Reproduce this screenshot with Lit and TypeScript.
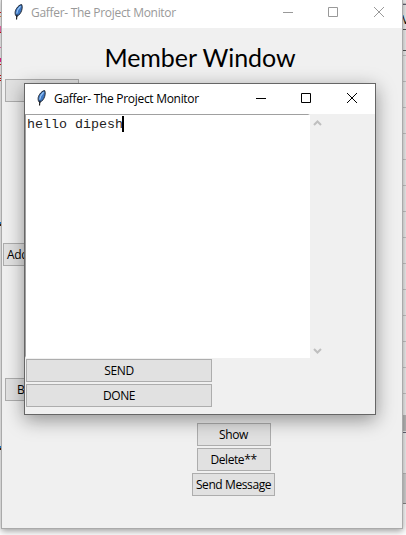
import { LitElement, html, css, svg } from "lit";
import { customElement, property } from "lit/decorators.js";

@customElement("title-bar")
class TitleBar extends LitElement {
  static styles = css`
    :host { display: flex; align-items: center; background: #fff; color: #000; height: 30px;
      font: 12px/16px "Open Sans", "Noto Sans", sans-serif; box-sizing: border-box; }
    .feather { margin: 0 0 2px 11px; width: 12px; height: 16px; flex: none; }
    .name { margin-left: 6px; letter-spacing: -0.3px; white-space: nowrap; flex: 1; }
    .controls { display: flex; flex: none; margin-bottom: 2px; }
    .controls svg { width: 46px; height: 12px; display: block; }
  `;
  @property() name = "";
  render() {
    return html`
      <svg class="feather" viewBox="0 0 12 16">
        <path d="M3.500 12.500C1.500 10.500 1.800 7 3.500 4.500C5 2.200 7 .6 8.700 .6C9.700 2.500 9.200 6 7.800 8.500C6.600 10.600 5 12 3.500 12.500Z" fill="#3f78c4" stroke="#14181f" stroke-width=".9"/>
        <path d="M7.600 2.200C5.400 4 4.200 6.500 3.700 9.500" fill="none" stroke="#9cc8f5" stroke-width="1.200"/>
        <path d="M4 10.500L3.500 15.500" stroke="#111" stroke-width="1.100"/>
      </svg>
      <span class="name">${this.name}</span>
      <div class="controls">
        ${[svg`<path d="M19 6.500H29"/>`, svg`<path d="M18.500 1.500H27.500V10.500H18.500Z"/>`, svg`<path d="M18 1L28 11M28 1L18 11"/>`].map(
          (p) => html`<svg viewBox="0 0 46 12" fill="none" stroke="currentColor" stroke-width="1">${p}</svg>`
        )}
      </div>`;
  }
}

@customElement("push-button")
class PushButton extends LitElement {
  static styles = css`
    :host { display: flex; align-items: center; justify-content: center; box-sizing: border-box;
      height: 23px; width: 74px; border: 1px solid #adadad; background: #e1e1e1; color: #000;
      font: 12px/16px "Open Sans", "Noto Sans", sans-serif; letter-spacing: -0.4px; white-space: nowrap; }
  `;
  render() { return html`<slot></slot>`; }
}

@customElement("app-root")
class AppRoot extends LitElement {
  static styles = css`
    :host { display: flex; justify-content: space-between; position: relative; width: 406px; height: 535px; overflow: hidden; background: #fff; }
    .code { width: 2px; height: 535px; background: linear-gradient(#fff 12px, #d22 12px 13px, #fff 13px 16px, #e84 16px 17px, #fff 17px 26px,
      #f7b 26px 32px, #d11 32px 33px, #fff 33px 47px, #f7b 47px 48px, #fff 48px 58px, #f29 58px 62px, #fff 62px 64px, #d11 64px 65px, #fff 65px 75px,
      #d11 75px 76px, #fff 76px 78px, #d11 78px 79px, #fff 79px 80px, #d11 80px 81px, #fff 81px 222px, #28d 222px 224px, #421 224px 226px,
      #fff 226px 446px, #28d 446px 448px, #421 448px 450px, #fff 450px); }
    .list { width: 4px; height: 504px; border-bottom: 1px solid #888; overflow: hidden; font: 12px/18px "Open Sans", sans-serif; padding-top: 11px; box-sizing: border-box;
      background: linear-gradient(#fff0 4px, #667 4px 5px, #fff0 5px 29px, #555 29px 30px, #fff0 30px 50px, #555 50px 51px, #fff0 51px 415px,
        #bbb 415px 431px, #eee 431px 432px, #667 432px 433px, #f2f2f2 433px 473px, #bbb 473px 474px, #d4d4d4 474px),
        repeating-linear-gradient(#f2f2f2 0 3px, #c8c8c8 3px 4px, #f2f2f2 4px 26px); }
    .window { position: absolute; box-sizing: border-box; display: flex; flex-direction: column; background: #f0f0f0; }
    .main { left: 1px; top: -3px; width: 402px; height: 532px; border: 1px solid #aaa; box-shadow: 0 2px 7px #0006; }
    .main title-bar { color: #999; }
    .dialog { left: 24px; top: 83px; width: 352px; height: 332px; border: 1px solid #666; box-shadow: 0 5px 18px #0006; }
    h1 { margin: 12px 0 0; padding-right: 4px; text-align: center; font: 400 25px/34px Lato, sans-serif; letter-spacing: -0.05px; color: #000; }
    .left { display: flex; flex-direction: column; align-items: flex-start; margin: 5px 0 0 3px; }
    .add { margin: 141px 0 0 -2px; justify-content: flex-start; padding-left: 3px; }
    .back { margin-top: 112px; justify-content: flex-start; padding-left: 11px; }
    .actions { display: flex; flex-direction: column; align-items: center; gap: 2px; margin-top: 22px; width: 463px; }
    .wide { width: 83px; }
    .editor { display: flex; width: 300px; height: 244px; }
    .text { box-sizing: border-box; width: 285px; height: 244px; background: #fff; border: solid #fff; border-width: 1px 2px 2px 1px;
      border-top-color: #a0a0a0; border-left-color: #a0a0a0;
      padding: 1px 0 0 1px; font: 13.333px/18px "Liberation Mono", monospace; color: #222; display: flex; align-items: flex-start; }
    .caret { width: 2px; height: 16px; margin-left: -1px; background: #000; }
    .scroll { display: flex; flex-direction: column; justify-content: space-between; padding: 6px 0 4px 3px; }
    .scroll svg { width: 9px; height: 6px; display: block; }
    .form { display: flex; flex-direction: column; gap: 2px; padding: 1px; }
    .form push-button { width: 186px; }
  `;
  render() {
    return html`
      <div class="code"></div>
      <div class="list">V</div>
      <section class="window main">
        <title-bar name="Gaffer- The Project Monitor"></title-bar>
        <h1>Member Window</h1>
        <div class="left">
          <push-button></push-button>
          <push-button class="add">Add</push-button>
          <push-button class="back">B</push-button>
        </div>
        <div class="actions">
          <push-button>Show</push-button>
          <push-button>Delete**</push-button>
          <push-button class="wide">Send Message</push-button>
        </div>
      </section>
      <section class="window dialog">
        <title-bar name="Gaffer- The Project Monitor"></title-bar>
        <div class="editor">
          <div class="text"><span>hello dipesh</span><i class="caret"></i></div>
          <div class="scroll">
            <svg viewBox="0 0 9 6"><path d="M1 5L4.500 1.500L8 5" fill="none" stroke="#bfbfbf" stroke-width="2"/></svg>
            <svg viewBox="0 0 9 6"><path d="M1 1L4.500 4.500L8 1" fill="none" stroke="#bfbfbf" stroke-width="2"/></svg>
          </div>
        </div>
        <div class="form"><push-button>SEND</push-button><push-button>DONE</push-button></div>
      </section>`;
  }
}
